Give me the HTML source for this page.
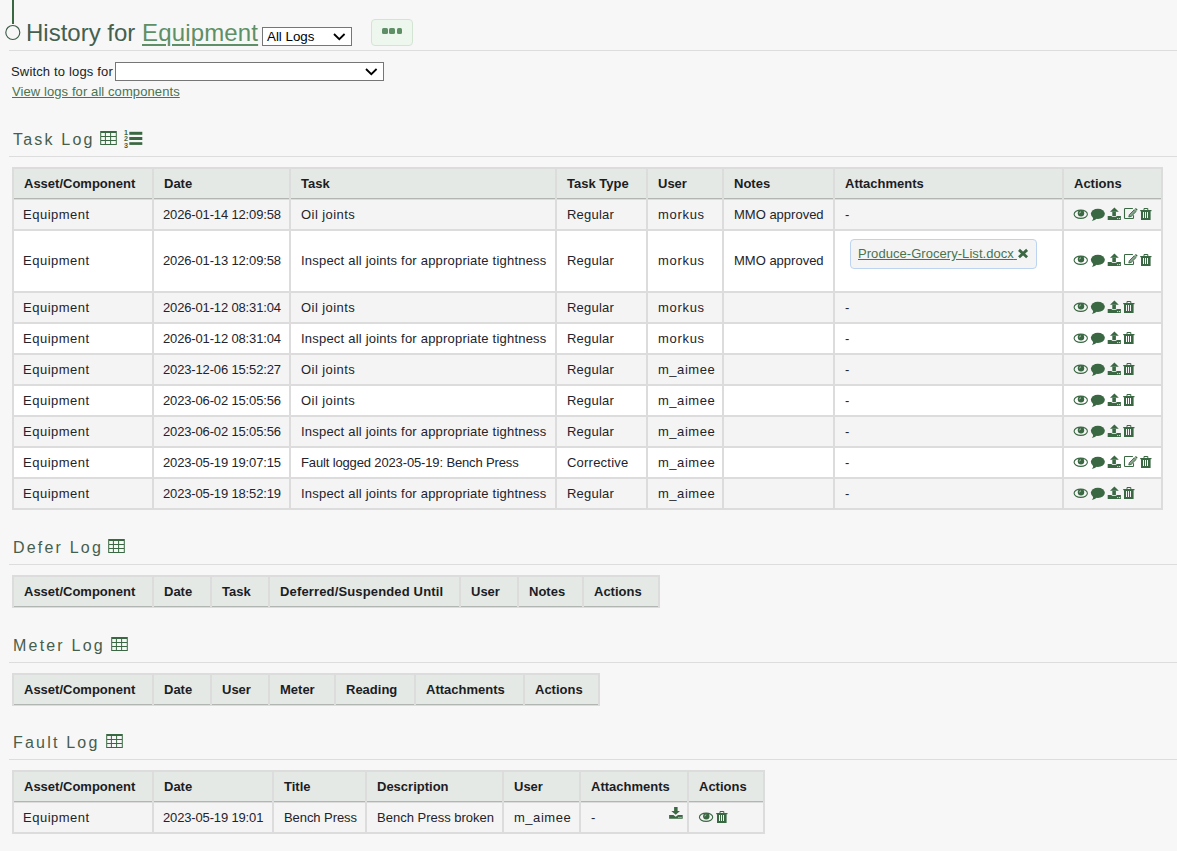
<!DOCTYPE html>
<html><head><meta charset="utf-8"><title>History for Equipment</title>
<style>
html,body{margin:0;padding:0;}
body{width:1177px;height:851px;background:#f7f7f7;position:relative;overflow:hidden;font-family:"Liberation Sans",sans-serif;font-size:13px;color:#222;}
.ic{position:absolute;display:block;overflow:visible}
.tbl{position:absolute;background:#dcdcdc}
.th,.td{position:absolute;box-sizing:border-box;padding-left:10px;white-space:nowrap;overflow:visible}
.th{font-weight:bold;color:#1c1c24}
.td{color:#23232b}
.hd{position:absolute;left:13px;font-size:16px;letter-spacing:2.2px;color:#465e4d;line-height:19px;height:19px;white-space:nowrap}
.hr{position:absolute;left:9px;width:1168px;height:1px;background:#dddddd}
a{color:#48744f;text-decoration:underline}
.sel{position:absolute;box-sizing:border-box;border:1px solid #767676;background:#fff;font-size:13.33px;color:#000;}
</style></head><body>

<div style="position:absolute;left:12px;top:0;width:2px;height:24px;background:#3a6843"></div>
<svg class="ic" style="left:4px;top:24px" width="18" height="18" viewBox="0 0 18 18"><circle cx="8.8" cy="8.45" r="7.0" fill="none" stroke="#3d5e48" stroke-width="1.15"/></svg>
<div style="position:absolute;left:26px;top:19.4px;font-size:24px;line-height:28px;color:#465f4f;white-space:nowrap">History for <a style="color:#5e8f66;text-decoration-thickness:1.5px;text-underline-offset:3px;letter-spacing:0.15px">Equipment</a></div>
<div class="sel" style="left:262px;top:27px;width:90px;height:19px;line-height:17px;padding-left:4px">All Logs</div>
<svg class="ic" style="left:333px;top:33px" width="13" height="8" viewBox="0 0 13 8"><path d="M1,1 L6.3,6.2 L11.6,1" fill="none" stroke="#000" stroke-width="1.8"/></svg>
<div style="position:absolute;left:371px;top:19px;width:40px;height:25px;border:1px solid #d3e4d3;border-radius:4px;background:#eef7ee"></div>
<div style="position:absolute;left:382px;top:28px;width:5.5px;height:6px;border-radius:1.5px;background:#5e8f66"></div>
<div style="position:absolute;left:389.3px;top:28px;width:5.5px;height:6px;border-radius:1.5px;background:#5e8f66"></div>
<div style="position:absolute;left:396.5px;top:28px;width:5.5px;height:6px;border-radius:1.5px;background:#5e8f66"></div>
<div class="hr" style="top:50px"></div>
<div style="position:absolute;left:11px;top:62px;line-height:19px;white-space:nowrap;letter-spacing:0.16px">Switch to logs for</div>
<div class="sel" style="left:115px;top:62px;width:269px;height:19px"></div>
<svg class="ic" style="left:365px;top:68px" width="13" height="8" viewBox="0 0 13 8"><path d="M1,1 L6.3,6.2 L11.6,1" fill="none" stroke="#000" stroke-width="1.8"/></svg>
<div style="position:absolute;left:12px;top:82px;line-height:19px;white-space:nowrap;letter-spacing:0.09px"><a>View logs for all components</a></div>
<div class="hd" style="top:130px">Task Log</div>
<svg class="ic" style="left:100px;top:131px" width="17" height="14" viewBox="0 0 17 14"><path d="M0.2,0 H16.8 V13.9 H0.2 Z M1.2,2.1 V5.0 H4.9 V2.1 Z M5.9,2.1 V5.0 H10.1 V2.1 Z M11.1,2.1 V5.0 H15.8 V2.1 Z M1.2,6.0 V9.0 H4.9 V6.0 Z M5.9,6.0 V9.0 H10.1 V6.0 Z M11.1,6.0 V9.0 H15.8 V6.0 Z M1.2,10.0 V12.9 H4.9 V10.0 Z M5.9,10.0 V12.9 H10.1 V10.0 Z M11.1,10.0 V12.9 H15.8 V10.0 Z" fill="#3a6843" fill-rule="evenodd"/></svg><svg class="ic" style="left:124px;top:129px" width="19" height="20" viewBox="0 0 19 20"><text x="0.1" y="5.8" font-family="Liberation Sans" font-weight="bold" font-size="7.6" textLength="4" lengthAdjust="spacingAndGlyphs" fill="#3a6843">1</text><text x="0.1" y="11.7" font-family="Liberation Sans" font-weight="bold" font-size="7.6" textLength="4" lengthAdjust="spacingAndGlyphs" fill="#3a6843">2</text><text x="0.1" y="18.8" font-family="Liberation Sans" font-weight="bold" font-size="7.6" textLength="4" lengthAdjust="spacingAndGlyphs" fill="#3a6843">3</text><rect x="5.3" y="2.8" width="13" height="3" fill="#3a6843"/><rect x="5.3" y="8" width="13" height="3" fill="#3a6843"/><rect x="5.3" y="13.2" width="13" height="2.7" fill="#3a6843"/></svg>
<div class="hr" style="top:156px"></div>
<div class="tbl" style="left:12px;top:167px;width:1151px;height:343px"><div class="th" style="left:2px;top:2px;width:138px;height:29px;background:#e4e9e5;line-height:29px">Asset/Component</div><div class="th" style="left:142px;top:2px;width:135px;height:29px;background:#e4e9e5;line-height:29px">Date</div><div class="th" style="left:279px;top:2px;width:264px;height:29px;background:#e4e9e5;line-height:29px">Task</div><div class="th" style="left:545px;top:2px;width:89px;height:29px;background:#e4e9e5;line-height:29px">Task Type</div><div class="th" style="left:636px;top:2px;width:74px;height:29px;background:#e4e9e5;line-height:29px">User</div><div class="th" style="left:712px;top:2px;width:109px;height:29px;background:#e4e9e5;line-height:29px">Notes</div><div class="th" style="left:823px;top:2px;width:227px;height:29px;background:#e4e9e5;line-height:29px">Attachments</div><div class="th" style="left:1052px;top:2px;width:97px;height:29px;background:#e4e9e5;line-height:29px">Actions</div><div style="position:absolute;left:2px;top:31px;width:138px;height:1px;background:#b2b6b2"></div><div style="position:absolute;left:142px;top:31px;width:135px;height:1px;background:#b2b6b2"></div><div style="position:absolute;left:279px;top:31px;width:264px;height:1px;background:#b2b6b2"></div><div style="position:absolute;left:545px;top:31px;width:89px;height:1px;background:#b2b6b2"></div><div style="position:absolute;left:636px;top:31px;width:74px;height:1px;background:#b2b6b2"></div><div style="position:absolute;left:712px;top:31px;width:109px;height:1px;background:#b2b6b2"></div><div style="position:absolute;left:823px;top:31px;width:227px;height:1px;background:#b2b6b2"></div><div style="position:absolute;left:1052px;top:31px;width:97px;height:1px;background:#b2b6b2"></div><div class="td" style="left:2px;top:33px;width:138px;height:29px;background:#f4f4f4;line-height:29px"><span style="letter-spacing:0.5px;position:relative;left:-1px">Equipment</span></div><div class="td" style="left:142px;top:33px;width:135px;height:29px;background:#f4f4f4;line-height:29px"><span style="letter-spacing:-0.15px;position:relative;left:-1px">2026-01-14 12:09:58</span></div><div class="td" style="left:279px;top:33px;width:264px;height:29px;background:#f4f4f4;line-height:29px"><span style="letter-spacing:0.44px;position:relative;left:0px">Oil joints</span></div><div class="td" style="left:545px;top:33px;width:89px;height:29px;background:#f4f4f4;line-height:29px"><span style="letter-spacing:0.2px;position:relative;left:0px">Regular</span></div><div class="td" style="left:636px;top:33px;width:74px;height:29px;background:#f4f4f4;line-height:29px"><span style="letter-spacing:0.7px;position:relative;left:0px">morkus</span></div><div class="td" style="left:712px;top:33px;width:109px;height:29px;background:#f4f4f4;line-height:29px">MMO approved</div><div class="td" style="left:823px;top:33px;width:227px;height:29px;background:#f4f4f4;line-height:29px">-</div><div class="td" style="left:1052px;top:33px;width:97px;height:29px;background:#f4f4f4;line-height:29px"></div><div class="td" style="left:2px;top:64px;width:138px;height:60px;background:#ffffff;line-height:60px"><span style="letter-spacing:0.5px;position:relative;left:-1px">Equipment</span></div><div class="td" style="left:142px;top:64px;width:135px;height:60px;background:#ffffff;line-height:60px"><span style="letter-spacing:-0.15px;position:relative;left:-1px">2026-01-13 12:09:58</span></div><div class="td" style="left:279px;top:64px;width:264px;height:60px;background:#ffffff;line-height:60px"><span style="letter-spacing:0.21px;position:relative;left:0px">Inspect all joints for appropriate tightness</span></div><div class="td" style="left:545px;top:64px;width:89px;height:60px;background:#ffffff;line-height:60px"><span style="letter-spacing:0.2px;position:relative;left:0px">Regular</span></div><div class="td" style="left:636px;top:64px;width:74px;height:60px;background:#ffffff;line-height:60px"><span style="letter-spacing:0.7px;position:relative;left:0px">morkus</span></div><div class="td" style="left:712px;top:64px;width:109px;height:60px;background:#ffffff;line-height:60px">MMO approved</div><div class="td" style="left:823px;top:64px;width:227px;height:60px;background:#ffffff;line-height:60px"></div><div class="td" style="left:1052px;top:64px;width:97px;height:60px;background:#ffffff;line-height:60px"></div><div class="td" style="left:2px;top:126px;width:138px;height:29px;background:#f4f4f4;line-height:29px"><span style="letter-spacing:0.5px;position:relative;left:-1px">Equipment</span></div><div class="td" style="left:142px;top:126px;width:135px;height:29px;background:#f4f4f4;line-height:29px"><span style="letter-spacing:-0.15px;position:relative;left:-1px">2026-01-12 08:31:04</span></div><div class="td" style="left:279px;top:126px;width:264px;height:29px;background:#f4f4f4;line-height:29px"><span style="letter-spacing:0.44px;position:relative;left:0px">Oil joints</span></div><div class="td" style="left:545px;top:126px;width:89px;height:29px;background:#f4f4f4;line-height:29px"><span style="letter-spacing:0.2px;position:relative;left:0px">Regular</span></div><div class="td" style="left:636px;top:126px;width:74px;height:29px;background:#f4f4f4;line-height:29px"><span style="letter-spacing:0.7px;position:relative;left:0px">morkus</span></div><div class="td" style="left:712px;top:126px;width:109px;height:29px;background:#f4f4f4;line-height:29px"></div><div class="td" style="left:823px;top:126px;width:227px;height:29px;background:#f4f4f4;line-height:29px">-</div><div class="td" style="left:1052px;top:126px;width:97px;height:29px;background:#f4f4f4;line-height:29px"></div><div class="td" style="left:2px;top:157px;width:138px;height:29px;background:#ffffff;line-height:29px"><span style="letter-spacing:0.5px;position:relative;left:-1px">Equipment</span></div><div class="td" style="left:142px;top:157px;width:135px;height:29px;background:#ffffff;line-height:29px"><span style="letter-spacing:-0.15px;position:relative;left:-1px">2026-01-12 08:31:04</span></div><div class="td" style="left:279px;top:157px;width:264px;height:29px;background:#ffffff;line-height:29px"><span style="letter-spacing:0.21px;position:relative;left:0px">Inspect all joints for appropriate tightness</span></div><div class="td" style="left:545px;top:157px;width:89px;height:29px;background:#ffffff;line-height:29px"><span style="letter-spacing:0.2px;position:relative;left:0px">Regular</span></div><div class="td" style="left:636px;top:157px;width:74px;height:29px;background:#ffffff;line-height:29px"><span style="letter-spacing:0.7px;position:relative;left:0px">morkus</span></div><div class="td" style="left:712px;top:157px;width:109px;height:29px;background:#ffffff;line-height:29px"></div><div class="td" style="left:823px;top:157px;width:227px;height:29px;background:#ffffff;line-height:29px">-</div><div class="td" style="left:1052px;top:157px;width:97px;height:29px;background:#ffffff;line-height:29px"></div><div class="td" style="left:2px;top:188px;width:138px;height:29px;background:#f4f4f4;line-height:29px"><span style="letter-spacing:0.5px;position:relative;left:-1px">Equipment</span></div><div class="td" style="left:142px;top:188px;width:135px;height:29px;background:#f4f4f4;line-height:29px"><span style="letter-spacing:-0.15px;position:relative;left:-1px">2023-12-06 15:52:27</span></div><div class="td" style="left:279px;top:188px;width:264px;height:29px;background:#f4f4f4;line-height:29px"><span style="letter-spacing:0.44px;position:relative;left:0px">Oil joints</span></div><div class="td" style="left:545px;top:188px;width:89px;height:29px;background:#f4f4f4;line-height:29px"><span style="letter-spacing:0.2px;position:relative;left:0px">Regular</span></div><div class="td" style="left:636px;top:188px;width:74px;height:29px;background:#f4f4f4;line-height:29px"><span style="letter-spacing:0.53px;position:relative;left:0px">m_aimee</span></div><div class="td" style="left:712px;top:188px;width:109px;height:29px;background:#f4f4f4;line-height:29px"></div><div class="td" style="left:823px;top:188px;width:227px;height:29px;background:#f4f4f4;line-height:29px">-</div><div class="td" style="left:1052px;top:188px;width:97px;height:29px;background:#f4f4f4;line-height:29px"></div><div class="td" style="left:2px;top:219px;width:138px;height:29px;background:#ffffff;line-height:29px"><span style="letter-spacing:0.5px;position:relative;left:-1px">Equipment</span></div><div class="td" style="left:142px;top:219px;width:135px;height:29px;background:#ffffff;line-height:29px"><span style="letter-spacing:-0.15px;position:relative;left:-1px">2023-06-02 15:05:56</span></div><div class="td" style="left:279px;top:219px;width:264px;height:29px;background:#ffffff;line-height:29px"><span style="letter-spacing:0.44px;position:relative;left:0px">Oil joints</span></div><div class="td" style="left:545px;top:219px;width:89px;height:29px;background:#ffffff;line-height:29px"><span style="letter-spacing:0.2px;position:relative;left:0px">Regular</span></div><div class="td" style="left:636px;top:219px;width:74px;height:29px;background:#ffffff;line-height:29px"><span style="letter-spacing:0.53px;position:relative;left:0px">m_aimee</span></div><div class="td" style="left:712px;top:219px;width:109px;height:29px;background:#ffffff;line-height:29px"></div><div class="td" style="left:823px;top:219px;width:227px;height:29px;background:#ffffff;line-height:29px">-</div><div class="td" style="left:1052px;top:219px;width:97px;height:29px;background:#ffffff;line-height:29px"></div><div class="td" style="left:2px;top:250px;width:138px;height:29px;background:#f4f4f4;line-height:29px"><span style="letter-spacing:0.5px;position:relative;left:-1px">Equipment</span></div><div class="td" style="left:142px;top:250px;width:135px;height:29px;background:#f4f4f4;line-height:29px"><span style="letter-spacing:-0.15px;position:relative;left:-1px">2023-06-02 15:05:56</span></div><div class="td" style="left:279px;top:250px;width:264px;height:29px;background:#f4f4f4;line-height:29px"><span style="letter-spacing:0.21px;position:relative;left:0px">Inspect all joints for appropriate tightness</span></div><div class="td" style="left:545px;top:250px;width:89px;height:29px;background:#f4f4f4;line-height:29px"><span style="letter-spacing:0.2px;position:relative;left:0px">Regular</span></div><div class="td" style="left:636px;top:250px;width:74px;height:29px;background:#f4f4f4;line-height:29px"><span style="letter-spacing:0.53px;position:relative;left:0px">m_aimee</span></div><div class="td" style="left:712px;top:250px;width:109px;height:29px;background:#f4f4f4;line-height:29px"></div><div class="td" style="left:823px;top:250px;width:227px;height:29px;background:#f4f4f4;line-height:29px">-</div><div class="td" style="left:1052px;top:250px;width:97px;height:29px;background:#f4f4f4;line-height:29px"></div><div class="td" style="left:2px;top:281px;width:138px;height:29px;background:#ffffff;line-height:29px"><span style="letter-spacing:0.5px;position:relative;left:-1px">Equipment</span></div><div class="td" style="left:142px;top:281px;width:135px;height:29px;background:#ffffff;line-height:29px"><span style="letter-spacing:-0.15px;position:relative;left:-1px">2023-05-19 19:07:15</span></div><div class="td" style="left:279px;top:281px;width:264px;height:29px;background:#ffffff;line-height:29px"><span style="letter-spacing:-0.14px;position:relative;left:0px">Fault logged 2023-05-19: Bench Press</span></div><div class="td" style="left:545px;top:281px;width:89px;height:29px;background:#ffffff;line-height:29px"><span style="letter-spacing:0.22px;position:relative;left:0px">Corrective</span></div><div class="td" style="left:636px;top:281px;width:74px;height:29px;background:#ffffff;line-height:29px"><span style="letter-spacing:0.53px;position:relative;left:0px">m_aimee</span></div><div class="td" style="left:712px;top:281px;width:109px;height:29px;background:#ffffff;line-height:29px"></div><div class="td" style="left:823px;top:281px;width:227px;height:29px;background:#ffffff;line-height:29px">-</div><div class="td" style="left:1052px;top:281px;width:97px;height:29px;background:#ffffff;line-height:29px"></div><div class="td" style="left:2px;top:312px;width:138px;height:29px;background:#f4f4f4;line-height:29px"><span style="letter-spacing:0.5px;position:relative;left:-1px">Equipment</span></div><div class="td" style="left:142px;top:312px;width:135px;height:29px;background:#f4f4f4;line-height:29px"><span style="letter-spacing:-0.15px;position:relative;left:-1px">2023-05-19 18:52:19</span></div><div class="td" style="left:279px;top:312px;width:264px;height:29px;background:#f4f4f4;line-height:29px"><span style="letter-spacing:0.21px;position:relative;left:0px">Inspect all joints for appropriate tightness</span></div><div class="td" style="left:545px;top:312px;width:89px;height:29px;background:#f4f4f4;line-height:29px"><span style="letter-spacing:0.2px;position:relative;left:0px">Regular</span></div><div class="td" style="left:636px;top:312px;width:74px;height:29px;background:#f4f4f4;line-height:29px"><span style="letter-spacing:0.53px;position:relative;left:0px">m_aimee</span></div><div class="td" style="left:712px;top:312px;width:109px;height:29px;background:#f4f4f4;line-height:29px"></div><div class="td" style="left:823px;top:312px;width:227px;height:29px;background:#f4f4f4;line-height:29px">-</div><div class="td" style="left:1052px;top:312px;width:97px;height:29px;background:#f4f4f4;line-height:29px"></div></div>
<svg class="ic" style="left:1073px;top:209px" width="16" height="11" viewBox="0 0 16 11"><g transform="translate(0.5,0.5)"><ellipse cx="7.25" cy="4.75" rx="6.65" ry="4.15" fill="none" stroke="#3a6843" stroke-width="1.1"/><circle cx="7.5" cy="3.75" r="3.2" fill="#3a6843"/><path d="M6.0,3.9 Q6.0,2.4 7.5,2.3" fill="none" stroke="#eef0ee" stroke-width="0.75" opacity="0.85"/></g></svg><svg class="ic" style="left:1090px;top:208px" width="16" height="14" viewBox="0 0 16 14"><g transform="translate(0.5,0.5)"><ellipse cx="7.35" cy="5.35" rx="7" ry="5.05" fill="#3a6843"/><path d="M1.9,8.0 Q3.6,10.4 1.3,12.4 Q4.6,11.6 6.6,10.0 Z" fill="#3a6843"/></g></svg><svg class="ic" style="left:1107px;top:207px" width="15" height="14" viewBox="0 0 15 14"><g transform="translate(0.5,0.5)"><path d="M2.5,4.3 L6.9,0.1 L11.3,4.3 Z" fill="#3a6843"/><rect x="4.8" y="4.2" width="3.6" height="4.5" fill="#3a6843"/><path d="M0.2,8.5 H4.0 Q4.4,9.4 5.2,9.4 H8.0 Q8.8,9.4 9.2,8.5 H13.4 V12.4 H0.2 Z" fill="#3a6843"/><rect x="9.6" y="10.5" width="1.1" height="1.1" fill="#d5ddd5"/><rect x="11.5" y="10.5" width="1.1" height="1.1" fill="#d5ddd5"/></g></svg><svg class="ic" style="left:1123px;top:208px" width="16" height="12" viewBox="0 0 16 12"><path d="M9.9,0.5 H2.2 Q1.5,0.5 1.5,1.2 V9.8 Q1.5,10.5 2.2,10.5 H9.8 Q10.5,10.5 10.5,9.8 V7.2" fill="none" stroke="#3a6843" stroke-width="1.1"/><path d="M5.8,9.0 L6.4,6.6 L11.3,1.7 L13.1,3.5 L8.2,8.4 Z" fill="#3a6843" fill-opacity="0.6" stroke="#3a6843" stroke-width="0.9" stroke-linejoin="round"/><path d="M11.9,1.0 L12.9,0.0 L14.7,1.8 L13.7,2.8 Z" fill="#3a6843"/></svg><svg class="ic" style="left:1140px;top:208px" width="12" height="13" viewBox="0 0 12 13"><path d="M4.0,2.3 V0.5 H7.8 V2.3" fill="none" stroke="#3a6843" stroke-width="1"/><rect x="0.2" y="2.0" width="11.3" height="1.2" fill="#3a6843"/><path d="M1,3 H10.6 V12 H1 Z M3,4 V10 H4 V4 Z M5,4 V10 H6 V4 Z M7,4 V10 H8 V4 Z" fill="#3a6843" fill-rule="evenodd"/></svg>
<svg class="ic" style="left:1073px;top:255px" width="16" height="11" viewBox="0 0 16 11"><g transform="translate(0.5,0.5)"><ellipse cx="7.25" cy="4.75" rx="6.65" ry="4.15" fill="none" stroke="#3a6843" stroke-width="1.1"/><circle cx="7.5" cy="3.75" r="3.2" fill="#3a6843"/><path d="M6.0,3.9 Q6.0,2.4 7.5,2.3" fill="none" stroke="#eef0ee" stroke-width="0.75" opacity="0.85"/></g></svg><svg class="ic" style="left:1090px;top:254px" width="16" height="14" viewBox="0 0 16 14"><g transform="translate(0.5,0.5)"><ellipse cx="7.35" cy="5.35" rx="7" ry="5.05" fill="#3a6843"/><path d="M1.9,8.0 Q3.6,10.4 1.3,12.4 Q4.6,11.6 6.6,10.0 Z" fill="#3a6843"/></g></svg><svg class="ic" style="left:1107px;top:253px" width="15" height="14" viewBox="0 0 15 14"><g transform="translate(0.5,0.5)"><path d="M2.5,4.3 L6.9,0.1 L11.3,4.3 Z" fill="#3a6843"/><rect x="4.8" y="4.2" width="3.6" height="4.5" fill="#3a6843"/><path d="M0.2,8.5 H4.0 Q4.4,9.4 5.2,9.4 H8.0 Q8.8,9.4 9.2,8.5 H13.4 V12.4 H0.2 Z" fill="#3a6843"/><rect x="9.6" y="10.5" width="1.1" height="1.1" fill="#d5ddd5"/><rect x="11.5" y="10.5" width="1.1" height="1.1" fill="#d5ddd5"/></g></svg><svg class="ic" style="left:1123px;top:254px" width="16" height="12" viewBox="0 0 16 12"><path d="M9.9,0.5 H2.2 Q1.5,0.5 1.5,1.2 V9.8 Q1.5,10.5 2.2,10.5 H9.8 Q10.5,10.5 10.5,9.8 V7.2" fill="none" stroke="#3a6843" stroke-width="1.1"/><path d="M5.8,9.0 L6.4,6.6 L11.3,1.7 L13.1,3.5 L8.2,8.4 Z" fill="#3a6843" fill-opacity="0.6" stroke="#3a6843" stroke-width="0.9" stroke-linejoin="round"/><path d="M11.9,1.0 L12.9,0.0 L14.7,1.8 L13.7,2.8 Z" fill="#3a6843"/></svg><svg class="ic" style="left:1140px;top:254px" width="12" height="13" viewBox="0 0 12 13"><path d="M4.0,2.3 V0.5 H7.8 V2.3" fill="none" stroke="#3a6843" stroke-width="1"/><rect x="0.2" y="2.0" width="11.3" height="1.2" fill="#3a6843"/><path d="M1,3 H10.6 V12 H1 Z M3,4 V10 H4 V4 Z M5,4 V10 H6 V4 Z M7,4 V10 H8 V4 Z" fill="#3a6843" fill-rule="evenodd"/></svg>
<svg class="ic" style="left:1073px;top:302px" width="16" height="11" viewBox="0 0 16 11"><g transform="translate(0.5,0.5)"><ellipse cx="7.25" cy="4.75" rx="6.65" ry="4.15" fill="none" stroke="#3a6843" stroke-width="1.1"/><circle cx="7.5" cy="3.75" r="3.2" fill="#3a6843"/><path d="M6.0,3.9 Q6.0,2.4 7.5,2.3" fill="none" stroke="#eef0ee" stroke-width="0.75" opacity="0.85"/></g></svg><svg class="ic" style="left:1090px;top:301px" width="16" height="14" viewBox="0 0 16 14"><g transform="translate(0.5,0.5)"><ellipse cx="7.35" cy="5.35" rx="7" ry="5.05" fill="#3a6843"/><path d="M1.9,8.0 Q3.6,10.4 1.3,12.4 Q4.6,11.6 6.6,10.0 Z" fill="#3a6843"/></g></svg><svg class="ic" style="left:1107px;top:300px" width="15" height="14" viewBox="0 0 15 14"><g transform="translate(0.5,0.5)"><path d="M2.5,4.3 L6.9,0.1 L11.3,4.3 Z" fill="#3a6843"/><rect x="4.8" y="4.2" width="3.6" height="4.5" fill="#3a6843"/><path d="M0.2,8.5 H4.0 Q4.4,9.4 5.2,9.4 H8.0 Q8.8,9.4 9.2,8.5 H13.4 V12.4 H0.2 Z" fill="#3a6843"/><rect x="9.6" y="10.5" width="1.1" height="1.1" fill="#d5ddd5"/><rect x="11.5" y="10.5" width="1.1" height="1.1" fill="#d5ddd5"/></g></svg><svg class="ic" style="left:1123px;top:301px" width="12" height="13" viewBox="0 0 12 13"><path d="M4.0,2.3 V0.5 H7.8 V2.3" fill="none" stroke="#3a6843" stroke-width="1"/><rect x="0.2" y="2.0" width="11.3" height="1.2" fill="#3a6843"/><path d="M1,3 H10.6 V12 H1 Z M3,4 V10 H4 V4 Z M5,4 V10 H6 V4 Z M7,4 V10 H8 V4 Z" fill="#3a6843" fill-rule="evenodd"/></svg>
<svg class="ic" style="left:1073px;top:333px" width="16" height="11" viewBox="0 0 16 11"><g transform="translate(0.5,0.5)"><ellipse cx="7.25" cy="4.75" rx="6.65" ry="4.15" fill="none" stroke="#3a6843" stroke-width="1.1"/><circle cx="7.5" cy="3.75" r="3.2" fill="#3a6843"/><path d="M6.0,3.9 Q6.0,2.4 7.5,2.3" fill="none" stroke="#eef0ee" stroke-width="0.75" opacity="0.85"/></g></svg><svg class="ic" style="left:1090px;top:332px" width="16" height="14" viewBox="0 0 16 14"><g transform="translate(0.5,0.5)"><ellipse cx="7.35" cy="5.35" rx="7" ry="5.05" fill="#3a6843"/><path d="M1.9,8.0 Q3.6,10.4 1.3,12.4 Q4.6,11.6 6.6,10.0 Z" fill="#3a6843"/></g></svg><svg class="ic" style="left:1107px;top:331px" width="15" height="14" viewBox="0 0 15 14"><g transform="translate(0.5,0.5)"><path d="M2.5,4.3 L6.9,0.1 L11.3,4.3 Z" fill="#3a6843"/><rect x="4.8" y="4.2" width="3.6" height="4.5" fill="#3a6843"/><path d="M0.2,8.5 H4.0 Q4.4,9.4 5.2,9.4 H8.0 Q8.8,9.4 9.2,8.5 H13.4 V12.4 H0.2 Z" fill="#3a6843"/><rect x="9.6" y="10.5" width="1.1" height="1.1" fill="#d5ddd5"/><rect x="11.5" y="10.5" width="1.1" height="1.1" fill="#d5ddd5"/></g></svg><svg class="ic" style="left:1123px;top:332px" width="12" height="13" viewBox="0 0 12 13"><path d="M4.0,2.3 V0.5 H7.8 V2.3" fill="none" stroke="#3a6843" stroke-width="1"/><rect x="0.2" y="2.0" width="11.3" height="1.2" fill="#3a6843"/><path d="M1,3 H10.6 V12 H1 Z M3,4 V10 H4 V4 Z M5,4 V10 H6 V4 Z M7,4 V10 H8 V4 Z" fill="#3a6843" fill-rule="evenodd"/></svg>
<svg class="ic" style="left:1073px;top:364px" width="16" height="11" viewBox="0 0 16 11"><g transform="translate(0.5,0.5)"><ellipse cx="7.25" cy="4.75" rx="6.65" ry="4.15" fill="none" stroke="#3a6843" stroke-width="1.1"/><circle cx="7.5" cy="3.75" r="3.2" fill="#3a6843"/><path d="M6.0,3.9 Q6.0,2.4 7.5,2.3" fill="none" stroke="#eef0ee" stroke-width="0.75" opacity="0.85"/></g></svg><svg class="ic" style="left:1090px;top:363px" width="16" height="14" viewBox="0 0 16 14"><g transform="translate(0.5,0.5)"><ellipse cx="7.35" cy="5.35" rx="7" ry="5.05" fill="#3a6843"/><path d="M1.9,8.0 Q3.6,10.4 1.3,12.4 Q4.6,11.6 6.6,10.0 Z" fill="#3a6843"/></g></svg><svg class="ic" style="left:1107px;top:362px" width="15" height="14" viewBox="0 0 15 14"><g transform="translate(0.5,0.5)"><path d="M2.5,4.3 L6.9,0.1 L11.3,4.3 Z" fill="#3a6843"/><rect x="4.8" y="4.2" width="3.6" height="4.5" fill="#3a6843"/><path d="M0.2,8.5 H4.0 Q4.4,9.4 5.2,9.4 H8.0 Q8.8,9.4 9.2,8.5 H13.4 V12.4 H0.2 Z" fill="#3a6843"/><rect x="9.6" y="10.5" width="1.1" height="1.1" fill="#d5ddd5"/><rect x="11.5" y="10.5" width="1.1" height="1.1" fill="#d5ddd5"/></g></svg><svg class="ic" style="left:1123px;top:363px" width="12" height="13" viewBox="0 0 12 13"><path d="M4.0,2.3 V0.5 H7.8 V2.3" fill="none" stroke="#3a6843" stroke-width="1"/><rect x="0.2" y="2.0" width="11.3" height="1.2" fill="#3a6843"/><path d="M1,3 H10.6 V12 H1 Z M3,4 V10 H4 V4 Z M5,4 V10 H6 V4 Z M7,4 V10 H8 V4 Z" fill="#3a6843" fill-rule="evenodd"/></svg>
<svg class="ic" style="left:1073px;top:395px" width="16" height="11" viewBox="0 0 16 11"><g transform="translate(0.5,0.5)"><ellipse cx="7.25" cy="4.75" rx="6.65" ry="4.15" fill="none" stroke="#3a6843" stroke-width="1.1"/><circle cx="7.5" cy="3.75" r="3.2" fill="#3a6843"/><path d="M6.0,3.9 Q6.0,2.4 7.5,2.3" fill="none" stroke="#eef0ee" stroke-width="0.75" opacity="0.85"/></g></svg><svg class="ic" style="left:1090px;top:394px" width="16" height="14" viewBox="0 0 16 14"><g transform="translate(0.5,0.5)"><ellipse cx="7.35" cy="5.35" rx="7" ry="5.05" fill="#3a6843"/><path d="M1.9,8.0 Q3.6,10.4 1.3,12.4 Q4.6,11.6 6.6,10.0 Z" fill="#3a6843"/></g></svg><svg class="ic" style="left:1107px;top:393px" width="15" height="14" viewBox="0 0 15 14"><g transform="translate(0.5,0.5)"><path d="M2.5,4.3 L6.9,0.1 L11.3,4.3 Z" fill="#3a6843"/><rect x="4.8" y="4.2" width="3.6" height="4.5" fill="#3a6843"/><path d="M0.2,8.5 H4.0 Q4.4,9.4 5.2,9.4 H8.0 Q8.8,9.4 9.2,8.5 H13.4 V12.4 H0.2 Z" fill="#3a6843"/><rect x="9.6" y="10.5" width="1.1" height="1.1" fill="#d5ddd5"/><rect x="11.5" y="10.5" width="1.1" height="1.1" fill="#d5ddd5"/></g></svg><svg class="ic" style="left:1123px;top:394px" width="12" height="13" viewBox="0 0 12 13"><path d="M4.0,2.3 V0.5 H7.8 V2.3" fill="none" stroke="#3a6843" stroke-width="1"/><rect x="0.2" y="2.0" width="11.3" height="1.2" fill="#3a6843"/><path d="M1,3 H10.6 V12 H1 Z M3,4 V10 H4 V4 Z M5,4 V10 H6 V4 Z M7,4 V10 H8 V4 Z" fill="#3a6843" fill-rule="evenodd"/></svg>
<svg class="ic" style="left:1073px;top:426px" width="16" height="11" viewBox="0 0 16 11"><g transform="translate(0.5,0.5)"><ellipse cx="7.25" cy="4.75" rx="6.65" ry="4.15" fill="none" stroke="#3a6843" stroke-width="1.1"/><circle cx="7.5" cy="3.75" r="3.2" fill="#3a6843"/><path d="M6.0,3.9 Q6.0,2.4 7.5,2.3" fill="none" stroke="#eef0ee" stroke-width="0.75" opacity="0.85"/></g></svg><svg class="ic" style="left:1090px;top:425px" width="16" height="14" viewBox="0 0 16 14"><g transform="translate(0.5,0.5)"><ellipse cx="7.35" cy="5.35" rx="7" ry="5.05" fill="#3a6843"/><path d="M1.9,8.0 Q3.6,10.4 1.3,12.4 Q4.6,11.6 6.6,10.0 Z" fill="#3a6843"/></g></svg><svg class="ic" style="left:1107px;top:424px" width="15" height="14" viewBox="0 0 15 14"><g transform="translate(0.5,0.5)"><path d="M2.5,4.3 L6.9,0.1 L11.3,4.3 Z" fill="#3a6843"/><rect x="4.8" y="4.2" width="3.6" height="4.5" fill="#3a6843"/><path d="M0.2,8.5 H4.0 Q4.4,9.4 5.2,9.4 H8.0 Q8.8,9.4 9.2,8.5 H13.4 V12.4 H0.2 Z" fill="#3a6843"/><rect x="9.6" y="10.5" width="1.1" height="1.1" fill="#d5ddd5"/><rect x="11.5" y="10.5" width="1.1" height="1.1" fill="#d5ddd5"/></g></svg><svg class="ic" style="left:1123px;top:425px" width="12" height="13" viewBox="0 0 12 13"><path d="M4.0,2.3 V0.5 H7.8 V2.3" fill="none" stroke="#3a6843" stroke-width="1"/><rect x="0.2" y="2.0" width="11.3" height="1.2" fill="#3a6843"/><path d="M1,3 H10.6 V12 H1 Z M3,4 V10 H4 V4 Z M5,4 V10 H6 V4 Z M7,4 V10 H8 V4 Z" fill="#3a6843" fill-rule="evenodd"/></svg>
<svg class="ic" style="left:1073px;top:457px" width="16" height="11" viewBox="0 0 16 11"><g transform="translate(0.5,0.5)"><ellipse cx="7.25" cy="4.75" rx="6.65" ry="4.15" fill="none" stroke="#3a6843" stroke-width="1.1"/><circle cx="7.5" cy="3.75" r="3.2" fill="#3a6843"/><path d="M6.0,3.9 Q6.0,2.4 7.5,2.3" fill="none" stroke="#eef0ee" stroke-width="0.75" opacity="0.85"/></g></svg><svg class="ic" style="left:1090px;top:456px" width="16" height="14" viewBox="0 0 16 14"><g transform="translate(0.5,0.5)"><ellipse cx="7.35" cy="5.35" rx="7" ry="5.05" fill="#3a6843"/><path d="M1.9,8.0 Q3.6,10.4 1.3,12.4 Q4.6,11.6 6.6,10.0 Z" fill="#3a6843"/></g></svg><svg class="ic" style="left:1107px;top:455px" width="15" height="14" viewBox="0 0 15 14"><g transform="translate(0.5,0.5)"><path d="M2.5,4.3 L6.9,0.1 L11.3,4.3 Z" fill="#3a6843"/><rect x="4.8" y="4.2" width="3.6" height="4.5" fill="#3a6843"/><path d="M0.2,8.5 H4.0 Q4.4,9.4 5.2,9.4 H8.0 Q8.8,9.4 9.2,8.5 H13.4 V12.4 H0.2 Z" fill="#3a6843"/><rect x="9.6" y="10.5" width="1.1" height="1.1" fill="#d5ddd5"/><rect x="11.5" y="10.5" width="1.1" height="1.1" fill="#d5ddd5"/></g></svg><svg class="ic" style="left:1123px;top:456px" width="16" height="12" viewBox="0 0 16 12"><path d="M9.9,0.5 H2.2 Q1.5,0.5 1.5,1.2 V9.8 Q1.5,10.5 2.2,10.5 H9.8 Q10.5,10.5 10.5,9.8 V7.2" fill="none" stroke="#3a6843" stroke-width="1.1"/><path d="M5.8,9.0 L6.4,6.6 L11.3,1.7 L13.1,3.5 L8.2,8.4 Z" fill="#3a6843" fill-opacity="0.6" stroke="#3a6843" stroke-width="0.9" stroke-linejoin="round"/><path d="M11.9,1.0 L12.9,0.0 L14.7,1.8 L13.7,2.8 Z" fill="#3a6843"/></svg><svg class="ic" style="left:1140px;top:456px" width="12" height="13" viewBox="0 0 12 13"><path d="M4.0,2.3 V0.5 H7.8 V2.3" fill="none" stroke="#3a6843" stroke-width="1"/><rect x="0.2" y="2.0" width="11.3" height="1.2" fill="#3a6843"/><path d="M1,3 H10.6 V12 H1 Z M3,4 V10 H4 V4 Z M5,4 V10 H6 V4 Z M7,4 V10 H8 V4 Z" fill="#3a6843" fill-rule="evenodd"/></svg>
<svg class="ic" style="left:1073px;top:488px" width="16" height="11" viewBox="0 0 16 11"><g transform="translate(0.5,0.5)"><ellipse cx="7.25" cy="4.75" rx="6.65" ry="4.15" fill="none" stroke="#3a6843" stroke-width="1.1"/><circle cx="7.5" cy="3.75" r="3.2" fill="#3a6843"/><path d="M6.0,3.9 Q6.0,2.4 7.5,2.3" fill="none" stroke="#eef0ee" stroke-width="0.75" opacity="0.85"/></g></svg><svg class="ic" style="left:1090px;top:487px" width="16" height="14" viewBox="0 0 16 14"><g transform="translate(0.5,0.5)"><ellipse cx="7.35" cy="5.35" rx="7" ry="5.05" fill="#3a6843"/><path d="M1.9,8.0 Q3.6,10.4 1.3,12.4 Q4.6,11.6 6.6,10.0 Z" fill="#3a6843"/></g></svg><svg class="ic" style="left:1107px;top:486px" width="15" height="14" viewBox="0 0 15 14"><g transform="translate(0.5,0.5)"><path d="M2.5,4.3 L6.9,0.1 L11.3,4.3 Z" fill="#3a6843"/><rect x="4.8" y="4.2" width="3.6" height="4.5" fill="#3a6843"/><path d="M0.2,8.5 H4.0 Q4.4,9.4 5.2,9.4 H8.0 Q8.8,9.4 9.2,8.5 H13.4 V12.4 H0.2 Z" fill="#3a6843"/><rect x="9.6" y="10.5" width="1.1" height="1.1" fill="#d5ddd5"/><rect x="11.5" y="10.5" width="1.1" height="1.1" fill="#d5ddd5"/></g></svg><svg class="ic" style="left:1123px;top:487px" width="12" height="13" viewBox="0 0 12 13"><path d="M4.0,2.3 V0.5 H7.8 V2.3" fill="none" stroke="#3a6843" stroke-width="1"/><rect x="0.2" y="2.0" width="11.3" height="1.2" fill="#3a6843"/><path d="M1,3 H10.6 V12 H1 Z M3,4 V10 H4 V4 Z M5,4 V10 H6 V4 Z M7,4 V10 H8 V4 Z" fill="#3a6843" fill-rule="evenodd"/></svg>
<div style="position:absolute;left:850px;top:239px;width:187px;height:30px;box-sizing:border-box;border:1px solid #bcd4f0;border-radius:4px;background:#f4f4f4"></div>
<div style="position:absolute;left:858px;top:244px;line-height:19px;white-space:nowrap"><a style="letter-spacing:0.05px">Produce-Grocery-List.docx<span style="letter-spacing:-0.6px">&nbsp;</span></a></div>
<svg class="ic" style="left:1017.5px;top:248.7px" width="11" height="10" viewBox="0 0 11 10"><path d="M1.0,0.9 L9.1,8.3 M9.1,0.9 L1.0,8.3" stroke="#3a6843" stroke-width="2.8" stroke-linecap="butt"/></svg>
<div class="hd" style="top:538px">Defer Log</div>
<svg class="ic" style="left:108px;top:539px" width="17" height="14" viewBox="0 0 17 14"><path d="M0.2,0 H16.8 V13.9 H0.2 Z M1.2,2.1 V5.0 H4.9 V2.1 Z M5.9,2.1 V5.0 H10.1 V2.1 Z M11.1,2.1 V5.0 H15.8 V2.1 Z M1.2,6.0 V9.0 H4.9 V6.0 Z M5.9,6.0 V9.0 H10.1 V6.0 Z M11.1,6.0 V9.0 H15.8 V6.0 Z M1.2,10.0 V12.9 H4.9 V10.0 Z M5.9,10.0 V12.9 H10.1 V10.0 Z M11.1,10.0 V12.9 H15.8 V10.0 Z" fill="#3a6843" fill-rule="evenodd"/></svg>
<div class="hr" style="top:564px"></div>
<div class="tbl" style="left:12px;top:575px;width:648px;height:33px"><div class="th" style="left:2px;top:2px;width:138px;height:29px;background:#e4e9e5;line-height:29px">Asset/Component</div><div class="th" style="left:142px;top:2px;width:56px;height:29px;background:#e4e9e5;line-height:29px">Date</div><div class="th" style="left:200px;top:2px;width:56px;height:29px;background:#e4e9e5;line-height:29px">Task</div><div class="th" style="left:258px;top:2px;width:189px;height:29px;background:#e4e9e5;line-height:29px"><span style="letter-spacing:0.15px;position:relative;left:0px">Deferred/Suspended Until</span></div><div class="th" style="left:449px;top:2px;width:56px;height:29px;background:#e4e9e5;line-height:29px">User</div><div class="th" style="left:507px;top:2px;width:63px;height:29px;background:#e4e9e5;line-height:29px">Notes</div><div class="th" style="left:572px;top:2px;width:74px;height:29px;background:#e4e9e5;line-height:29px">Actions</div><div style="position:absolute;left:2px;top:31px;width:138px;height:1px;background:#b2b6b2"></div><div style="position:absolute;left:142px;top:31px;width:56px;height:1px;background:#b2b6b2"></div><div style="position:absolute;left:200px;top:31px;width:56px;height:1px;background:#b2b6b2"></div><div style="position:absolute;left:258px;top:31px;width:189px;height:1px;background:#b2b6b2"></div><div style="position:absolute;left:449px;top:31px;width:56px;height:1px;background:#b2b6b2"></div><div style="position:absolute;left:507px;top:31px;width:63px;height:1px;background:#b2b6b2"></div><div style="position:absolute;left:572px;top:31px;width:74px;height:1px;background:#b2b6b2"></div></div>
<div class="hd" style="top:636px">Meter Log</div>
<svg class="ic" style="left:111px;top:637px" width="17" height="14" viewBox="0 0 17 14"><path d="M0.2,0 H16.8 V13.9 H0.2 Z M1.2,2.1 V5.0 H4.9 V2.1 Z M5.9,2.1 V5.0 H10.1 V2.1 Z M11.1,2.1 V5.0 H15.8 V2.1 Z M1.2,6.0 V9.0 H4.9 V6.0 Z M5.9,6.0 V9.0 H10.1 V6.0 Z M11.1,6.0 V9.0 H15.8 V6.0 Z M1.2,10.0 V12.9 H4.9 V10.0 Z M5.9,10.0 V12.9 H10.1 V10.0 Z M11.1,10.0 V12.9 H15.8 V10.0 Z" fill="#3a6843" fill-rule="evenodd"/></svg>
<div class="hr" style="top:662px"></div>
<div class="tbl" style="left:12px;top:673px;width:588px;height:33px"><div class="th" style="left:2px;top:2px;width:138px;height:29px;background:#e4e9e5;line-height:29px">Asset/Component</div><div class="th" style="left:142px;top:2px;width:56px;height:29px;background:#e4e9e5;line-height:29px">Date</div><div class="th" style="left:200px;top:2px;width:56px;height:29px;background:#e4e9e5;line-height:29px">User</div><div class="th" style="left:258px;top:2px;width:64px;height:29px;background:#e4e9e5;line-height:29px">Meter</div><div class="th" style="left:324px;top:2px;width:78px;height:29px;background:#e4e9e5;line-height:29px">Reading</div><div class="th" style="left:404px;top:2px;width:107px;height:29px;background:#e4e9e5;line-height:29px">Attachments</div><div class="th" style="left:513px;top:2px;width:73px;height:29px;background:#e4e9e5;line-height:29px">Actions</div><div style="position:absolute;left:2px;top:31px;width:138px;height:1px;background:#b2b6b2"></div><div style="position:absolute;left:142px;top:31px;width:56px;height:1px;background:#b2b6b2"></div><div style="position:absolute;left:200px;top:31px;width:56px;height:1px;background:#b2b6b2"></div><div style="position:absolute;left:258px;top:31px;width:64px;height:1px;background:#b2b6b2"></div><div style="position:absolute;left:324px;top:31px;width:78px;height:1px;background:#b2b6b2"></div><div style="position:absolute;left:404px;top:31px;width:107px;height:1px;background:#b2b6b2"></div><div style="position:absolute;left:513px;top:31px;width:73px;height:1px;background:#b2b6b2"></div></div>
<div class="hd" style="top:733px">Fault Log</div>
<svg class="ic" style="left:106px;top:734px" width="17" height="14" viewBox="0 0 17 14"><path d="M0.2,0 H16.8 V13.9 H0.2 Z M1.2,2.1 V5.0 H4.9 V2.1 Z M5.9,2.1 V5.0 H10.1 V2.1 Z M11.1,2.1 V5.0 H15.8 V2.1 Z M1.2,6.0 V9.0 H4.9 V6.0 Z M5.9,6.0 V9.0 H10.1 V6.0 Z M11.1,6.0 V9.0 H15.8 V6.0 Z M1.2,10.0 V12.9 H4.9 V10.0 Z M5.9,10.0 V12.9 H10.1 V10.0 Z M11.1,10.0 V12.9 H15.8 V10.0 Z" fill="#3a6843" fill-rule="evenodd"/></svg>
<div class="hr" style="top:759px"></div>
<div class="tbl" style="left:12px;top:770px;width:753px;height:64px"><div class="th" style="left:2px;top:2px;width:138px;height:29px;background:#e4e9e5;line-height:29px">Asset/Component</div><div class="th" style="left:142px;top:2px;width:118px;height:29px;background:#e4e9e5;line-height:29px">Date</div><div class="th" style="left:262px;top:2px;width:91px;height:29px;background:#e4e9e5;line-height:29px">Title</div><div class="th" style="left:355px;top:2px;width:135px;height:29px;background:#e4e9e5;line-height:29px">Description</div><div class="th" style="left:492px;top:2px;width:75px;height:29px;background:#e4e9e5;line-height:29px">User</div><div class="th" style="left:569px;top:2px;width:106px;height:29px;background:#e4e9e5;line-height:29px">Attachments</div><div class="th" style="left:677px;top:2px;width:74px;height:29px;background:#e4e9e5;line-height:29px">Actions</div><div style="position:absolute;left:2px;top:31px;width:138px;height:1px;background:#b2b6b2"></div><div style="position:absolute;left:142px;top:31px;width:118px;height:1px;background:#b2b6b2"></div><div style="position:absolute;left:262px;top:31px;width:91px;height:1px;background:#b2b6b2"></div><div style="position:absolute;left:355px;top:31px;width:135px;height:1px;background:#b2b6b2"></div><div style="position:absolute;left:492px;top:31px;width:75px;height:1px;background:#b2b6b2"></div><div style="position:absolute;left:569px;top:31px;width:106px;height:1px;background:#b2b6b2"></div><div style="position:absolute;left:677px;top:31px;width:74px;height:1px;background:#b2b6b2"></div><div class="td" style="left:2px;top:33px;width:138px;height:29px;background:#f4f4f4;line-height:29px"><span style="letter-spacing:0.5px;position:relative;left:-1px">Equipment</span></div><div class="td" style="left:142px;top:33px;width:118px;height:29px;background:#f4f4f4;line-height:29px"><span style="letter-spacing:-0.15px;position:relative;left:-1px">2023-05-19 19:01</span></div><div class="td" style="left:262px;top:33px;width:91px;height:29px;background:#f4f4f4;line-height:29px"><span style="letter-spacing:-0.07px;position:relative;left:0px">Bench Press</span></div><div class="td" style="left:355px;top:33px;width:135px;height:29px;background:#f4f4f4;line-height:29px">Bench Press broken</div><div class="td" style="left:492px;top:33px;width:75px;height:29px;background:#f4f4f4;line-height:29px"><span style="letter-spacing:0.53px;position:relative;left:0px">m_aimee</span></div><div class="td" style="left:569px;top:33px;width:106px;height:29px;background:#f4f4f4;line-height:29px">-</div><div class="td" style="left:677px;top:33px;width:74px;height:29px;background:#f4f4f4;line-height:29px"></div></div>
<svg class="ic" style="left:669px;top:807px" width="14" height="13" viewBox="0 0 14 13"><rect x="5.1" y="0" width="3.5" height="4.2" fill="#3a6843"/><path d="M2.3,4.0 L11.0,4.0 L6.7,7.8 Z" fill="#3a6843"/><path d="M0.1,8 H4.4 L6.7,9.8 L9.0,8 H13.7 V11.8 H0.1 Z" fill="#3a6843"/><rect x="9.4" y="9.9" width="1.1" height="1.1" fill="#d5ddd5"/><rect x="11.4" y="9.9" width="1.1" height="1.1" fill="#d5ddd5"/></svg>
<svg class="ic" style="left:698px;top:812px" width="16" height="11" viewBox="0 0 16 11"><g transform="translate(0.8,0.5)"><ellipse cx="7.25" cy="4.75" rx="6.65" ry="4.15" fill="none" stroke="#3a6843" stroke-width="1.1"/><circle cx="7.5" cy="3.75" r="3.2" fill="#3a6843"/><path d="M6.0,3.9 Q6.0,2.4 7.5,2.3" fill="none" stroke="#eef0ee" stroke-width="0.75" opacity="0.85"/></g></svg>
<svg class="ic" style="left:716px;top:811px" width="12" height="13" viewBox="0 0 12 13"><path d="M4.0,2.3 V0.5 H7.8 V2.3" fill="none" stroke="#3a6843" stroke-width="1"/><rect x="0.2" y="2.0" width="11.3" height="1.2" fill="#3a6843"/><path d="M1,3 H10.6 V12 H1 Z M3,4 V10 H4 V4 Z M5,4 V10 H6 V4 Z M7,4 V10 H8 V4 Z" fill="#3a6843" fill-rule="evenodd"/></svg>
</body></html>
